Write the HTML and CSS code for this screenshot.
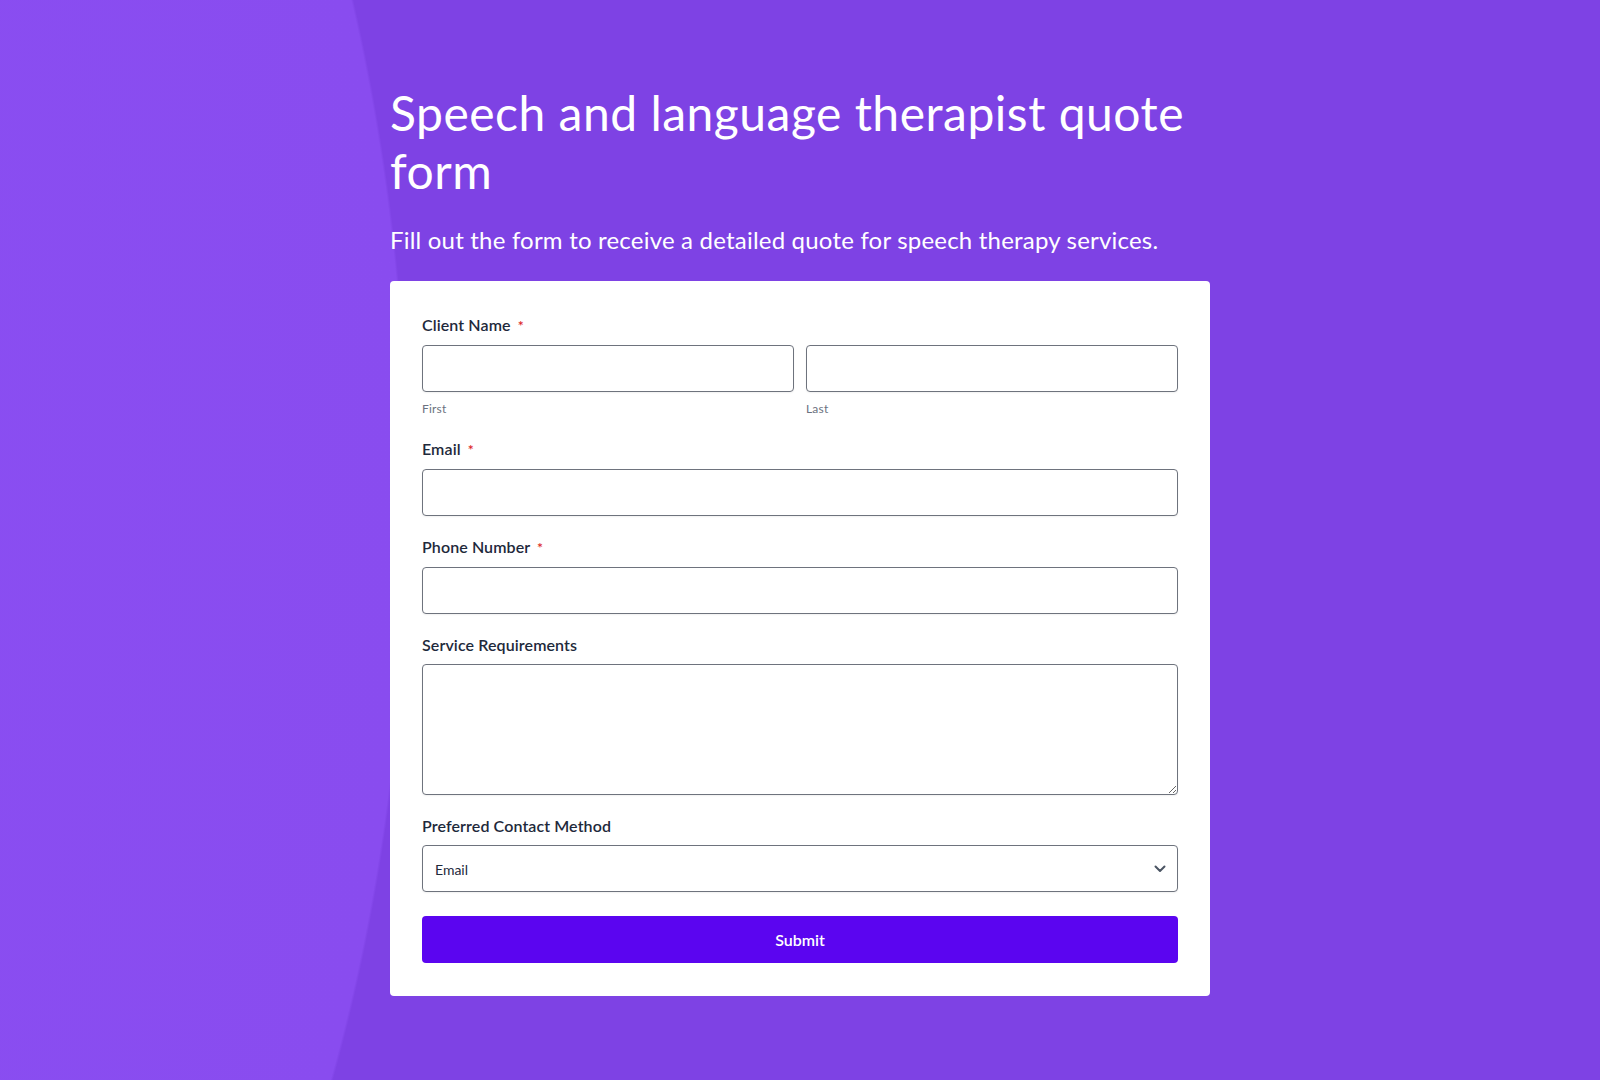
FILE: index.html
```html
<!DOCTYPE html>
<html lang="en">
<head>
<meta charset="utf-8">
<title>Speech and language therapist quote form</title>
<link rel="stylesheet" href="styles.css">
</head>
<body>
<main class="page">
  <h1 class="title">Speech and language therapist quote form</h1>
  <p class="subtitle">Fill out the form to receive a detailed quote for speech therapy services.</p>
  <form class="card">
    <div class="field">
      <label class="label">Client Name <span class="req">*</span></label>
      <div class="name-row">
        <div class="name-col">
          <input class="input" type="text">
          <span class="sublabel">First</span>
        </div>
        <div class="name-col">
          <input class="input" type="text">
          <span class="sublabel">Last</span>
        </div>
      </div>
    </div>
    <div class="field">
      <label class="label">Email <span class="req">*</span></label>
      <input class="input" type="email">
    </div>
    <div class="field">
      <label class="label">Phone Number <span class="req">*</span></label>
      <input class="input" type="tel">
    </div>
    <div class="field">
      <label class="label">Service Requirements</label>
      <textarea class="input textarea"></textarea>
    </div>
    <div class="field">
      <label class="label">Preferred Contact Method</label>
      <div class="select-wrap">
        <select class="input select">
          <option>Email</option>
          <option>Phone</option>
        </select>
        <svg class="chevron" width="12" height="8" viewBox="0 0 12 8"><path d="M1.5 1.5 L6 6 L10.5 1.5" fill="none" stroke="#4b5563" stroke-width="2" stroke-linecap="round" stroke-linejoin="round"/></svg>
      </div>
    </div>
    <button class="submit" type="button">Submit</button>
  </form>
</main>
</body>
</html>
```

FILE: styles.css
```css
* { box-sizing: border-box; }

html {
  background-color: #7e42e4;
  background-image:
    radial-gradient(ellipse 609px 1200px at -200px 500px, #8a4ef2 0, #894cef 99.6%, transparent 100%);
  min-height: 100%;
}

body {
  margin: 0;
  font-family: "Lato", "Noto Sans", sans-serif;
  color: #1e293b;
  height: 1080px;
  overflow: hidden;
}

.page {
  width: 820px;
  margin: 0 auto;
  padding-top: 84px;
}

.title {
  margin: 0;
  font-size: 48px;
  line-height: 1.2;
  font-weight: 400;
  letter-spacing: 0.5px;
  color: #ffffff;
}

.subtitle {
  margin: 23px 0 0;
  font-size: 24px;
  line-height: 36px;
  font-weight: 400;
  letter-spacing: 0.2px;
  color: #ffffff;
}

.card {
  margin-top: 23px;
  background: #ffffff;
  border-radius: 4px;
  padding: 32px 32px 33px;
  display: flex;
  flex-direction: column;
  gap: 19px;
}

.field {
  display: flex;
  flex-direction: column;
}

.label {
  font-size: 16px;
  line-height: 24px;
  font-weight: 600;
  letter-spacing: 0.1px;
  color: #1e293b;
  margin-bottom: 7px;
}

.req {
  color: #dc2626;
  font-size: 14px;
  margin-left: 3px;
}

.name-row {
  display: flex;
  gap: 12px;
}

.name-col {
  flex: 1;
  display: flex;
  flex-direction: column;
}

.sublabel {
  margin-top: 9px;
  margin-bottom: 1px;
  font-size: 12px;
  line-height: 16px;
  color: #6b7280;
  letter-spacing: 0.2px;
}

.input {
  display: block;
  width: 100%;
  height: 47px;
  border: 1px solid #6e737d;
  border-radius: 4px;
  background: #ffffff;
  box-shadow: 0 1px 2px rgba(0, 0, 0, 0.06);
  font-family: "Lato", "Noto Sans", sans-serif;
  font-size: 14px;
  color: #1e293b;
  padding: 0 12px;
  margin: 0;
}

.textarea {
  height: 131px;
  resize: vertical;
  padding: 10px 12px;
}

.select-wrap {
  position: relative;
}

.select {
  appearance: none;
  -webkit-appearance: none;
  padding-top: 2px;
}

.chevron {
  position: absolute;
  right: 12px;
  top: 20px;
  pointer-events: none;
}

.submit {
  margin-top: 5px;
  height: 47px;
  width: 100%;
  border: none;
  border-radius: 4px;
  background: #5b05f0;
  color: #ffffff;
  font-family: "Lato", "Noto Sans", sans-serif;
  font-size: 16px;
  font-weight: 600;
  cursor: pointer;
}
```
